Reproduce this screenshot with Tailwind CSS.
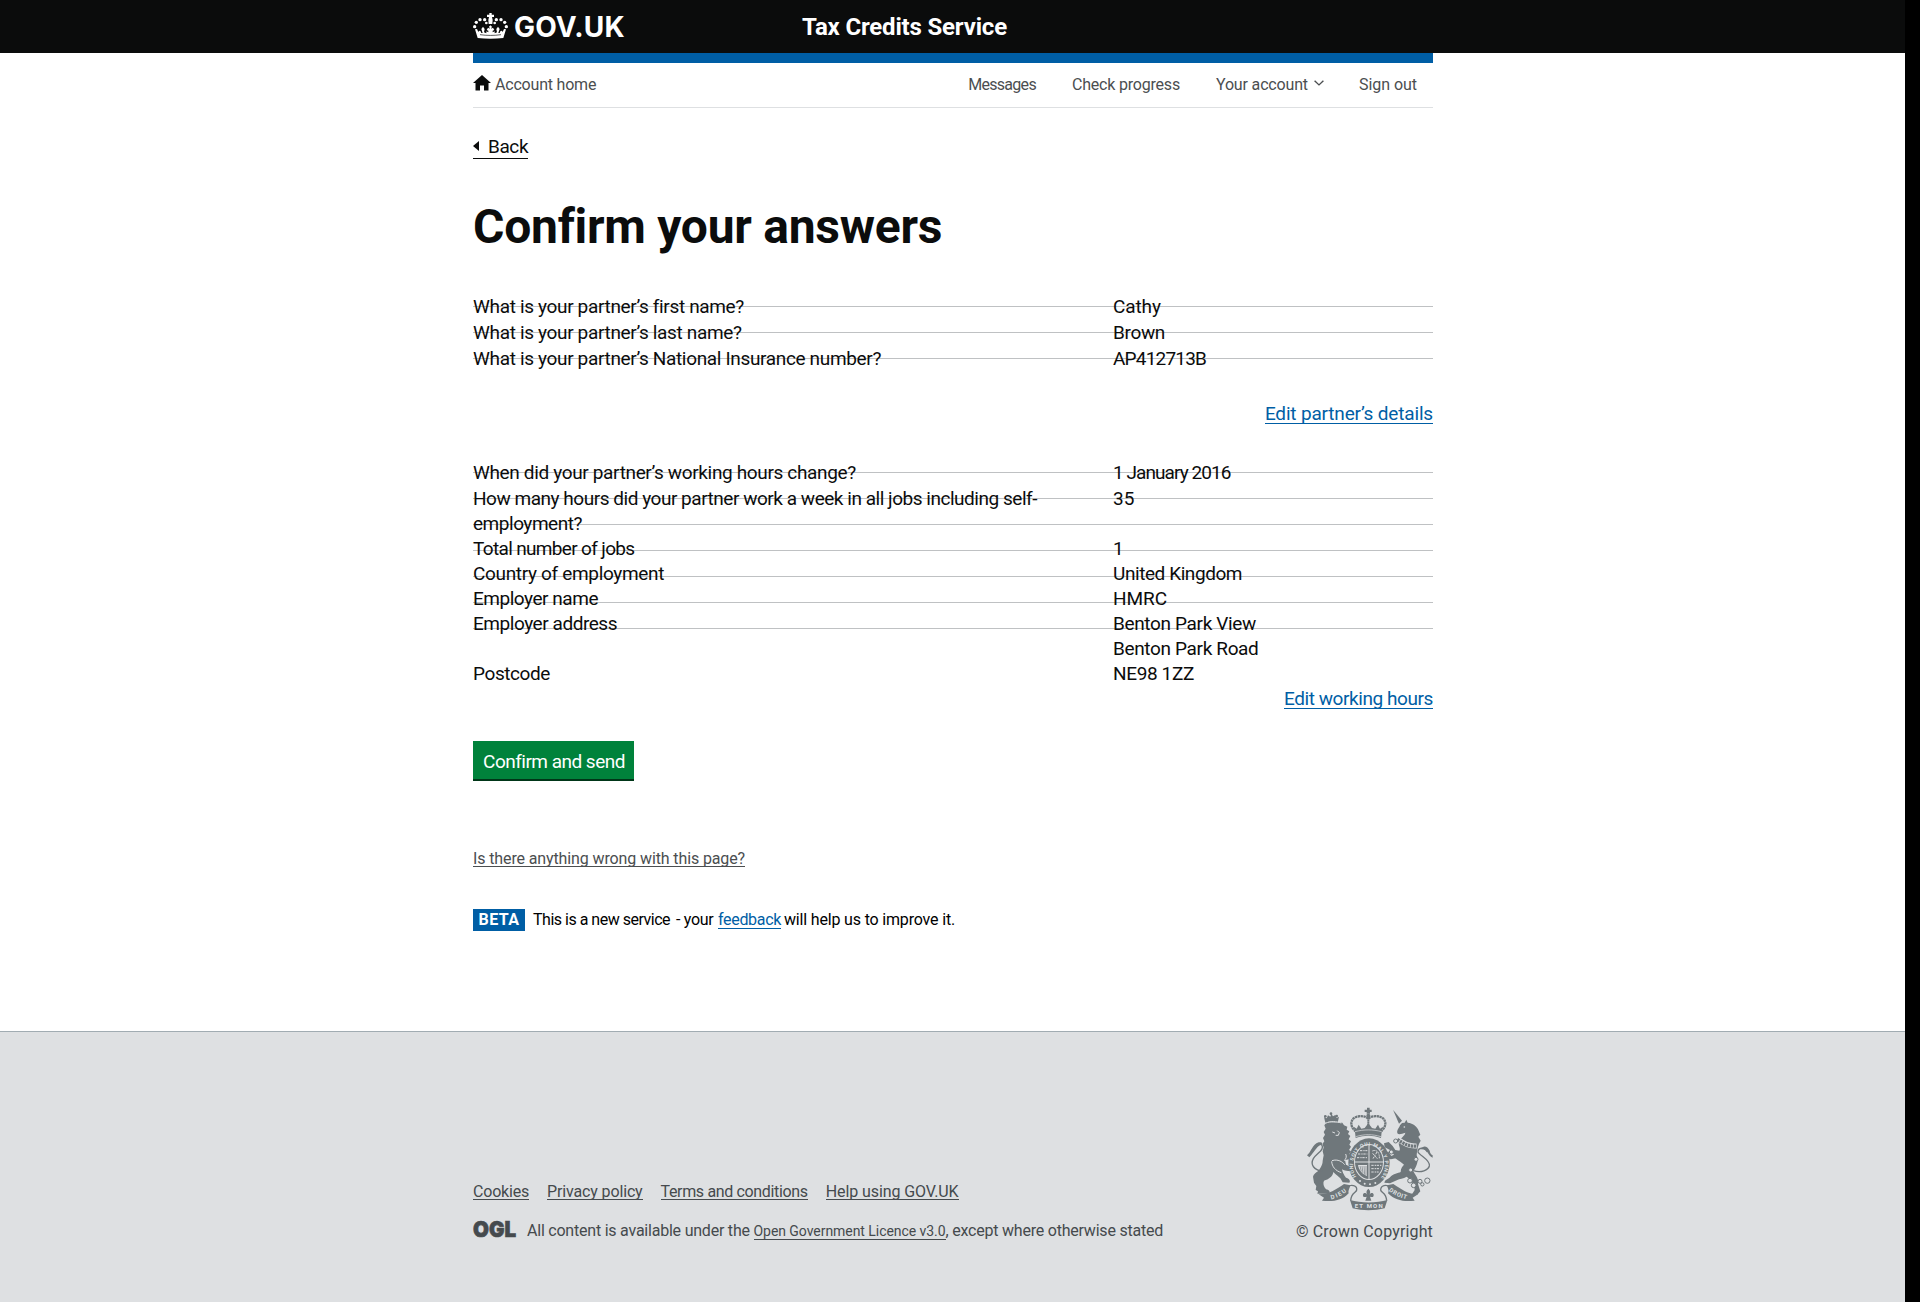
<!DOCTYPE html>
<html lang="en">
<head>
<meta charset="utf-8">
<title>Confirm your answers</title>
<script src="https://cdn.jsdelivr.net/npm/@tailwindcss/browser@4"></script>
</head>
<body class="bg-black font-['Roboto','Liberation_Sans',sans-serif] text-[#0b0c0c]">
<div class="flex min-h-[1302px] w-[1905px] flex-col bg-white">

  <header class="h-[53px] bg-[#0b0c0c] text-white">
    <div class="ml-[473px] flex h-full w-[960px] items-center">
      <a class="flex w-[329px] items-center gap-[6px]">
        <svg class="-mt-[2px] h-[26px] w-[35px]" viewBox="39 38 105 78" fill="#fff">
          <path d="M53 113 L45 87 L51 86 L55 95 C57 91 59 90 62 93 L64 98 L68 98 L64 86 L69 79 L74 86 L72 96 L79 99 L79 93 L85 96 L85 91 L80 89 L84 82 L90 85 L87 79 L91 75 L96 79 L93 85 L99 82 L103 89 L98 91 L98 96 L104 93 L104 99 L111 96 L109 86 L114 79 L119 86 L115 98 L119 98 L121 93 C124 90 126 91 128 95 L132 86 L138 87 L130 113 C105 116 78 116 53 113Z"/>
          <path d="M60 103 C80 106 103 106 123 103" fill="none" stroke="#0b0c0c" stroke-width="2"/>
          <circle cx="44" cy="79" r="5"/><circle cx="49" cy="66" r="5"/><circle cx="60" cy="58" r="5"/><circle cx="74" cy="58" r="5"/><circle cx="79" cy="68" r="4"/>
          <circle cx="139" cy="79" r="5"/><circle cx="134" cy="66" r="5"/><circle cx="123" cy="58" r="5"/><circle cx="109" cy="58" r="5"/><circle cx="104" cy="68" r="4"/>
          <path d="M88 38h7v5h7v7h-6l2 9-1 12h-11l-1-12 2-9h-6v-7h7z"/>
        </svg>
        <span class="font-['Inter',sans-serif] text-[28px] font-bold leading-8 tracking-[0.2px]">GOV.UK</span>
      </a>
      <span class="text-2xl font-bold tracking-[-0.18px]">Tax Credits Service</span>
    </div>
  </header>

  <div class="ml-[473px] w-[960px]">
    <div class="h-[10px] bg-[#005ea5]"></div>
    <nav class="flex h-[45px] items-center justify-between border-b border-[#dee0e2] pr-4 text-base leading-5 text-[#4b4e50]">
      <a class="flex items-center gap-1">
        <svg class="-mt-[5px] h-4 w-[18px]" viewBox="0 0 18 16" fill="#0b0c0c"><path d="M9 0l9 8h-2.500v7.500h-4.500v-5h-4v5h-4.500v-7.500h-2.500z"/></svg>
        <span class="tracking-[-0.2px]">Account home</span>
      </a>
      <div class="flex items-center gap-9">
        <a class="tracking-[-0.7px]">Messages</a>
        <a class="tracking-[-0.2px]">Check progress</a>
        <a class="flex items-center gap-[6px]"><span class="tracking-[-0.16px]">Your account</span>
          <svg class="-mt-[4px] h-[6px] w-[10px]" viewBox="0 0 10 6" fill="none" stroke="#4b4e50" stroke-width="1.400"><path d="M0.600 0.700 5 4.900 9.400 0.700"/></svg></a>
        <a class="-ml-px tracking-[-0.04px]">Sign out</a>
      </div>
    </nav>

    <main class="flex flex-col items-start text-[19px] leading-[25px]">
      <a class="mt-[26px] flex h-[25px] items-start gap-[9px] border-b border-[#0b0c0c] leading-[25px]">
        <svg class="mt-[7px] h-[10px] w-[6px]" viewBox="0 0 6 10" fill="#0b0c0c"><path d="M0 5 6 0V10z"/></svg>
        <span class="tracking-[-0.4px]">Back</span>
      </a>
      <h1 class="mt-[43px] text-5xl font-bold leading-[50px] tracking-[-0.26px]">Confirm your answers</h1>

      <!-- Partner details: ruled rows sit behind the question list -->
      <section class="mt-[29px] grid w-full">
        <ul class="col-start-1 row-start-1">
          <li class="h-[26px] border-b border-[#bfc1c3]"></li>
          <li class="h-[26px] border-b border-[#bfc1c3]"></li>
          <li class="h-[26px] border-b border-[#bfc1c3]"></li>
        </ul>
        <dl class="col-start-1 row-start-1 -mb-[13px] grid auto-rows-[26px] grid-cols-[640px_1fr] pt-[13px] tracking-[-0.34px]">
          <dt>What is your partner’s first name?</dt><dd class="tracking-[-0.1px]">Cathy</dd>
          <dt>What is your partner’s last name?</dt><dd>Brown</dd>
          <dt>What is your partner’s National Insurance number?</dt><dd class="tracking-[-0.8px]">AP412713B</dd>
        </dl>
      </section>
      <a class="mt-[44px] h-[21px] self-end border-b border-[#005ea5] leading-[22px] tracking-[-0.17px] text-[#005ea5]">Edit partner’s details</a>

      <!-- Working hours -->
      <section class="mt-[23px] grid w-full">
        <ul class="col-start-1 row-start-1">
          <li class="h-[26px] border-b border-[#bfc1c3]"></li>
          <li class="h-[26px] border-b border-[#bfc1c3]"></li>
          <li class="h-[26px] border-b border-[#bfc1c3]"></li>
          <li class="h-[26px] border-b border-[#bfc1c3]"></li>
          <li class="h-[26px] border-b border-[#bfc1c3]"></li>
          <li class="h-[26px] border-b border-[#bfc1c3]"></li>
          <li class="h-[26px] border-b border-[#bfc1c3]"></li>
        </ul>
        <dl class="col-start-1 row-start-1 grid grid-cols-[640px_1fr] pt-[13px]">
          <dt class="h-[26px] tracking-[-0.35px]">When did your partner’s working hours change?</dt><dd class="tracking-[-0.93px]">1 January 2016</dd>
          <dt class="tracking-[-0.47px]">How many hours did your partner work a week in all jobs including self-<br>employment?</dt><dd>35</dd>
          <dt class="tracking-[-0.66px]">Total number of jobs</dt><dd>1</dd>
          <dt class="tracking-[-0.33px]">Country of employment</dt><dd class="tracking-[-0.43px]">United Kingdom</dd>
          <dt class="tracking-[-0.47px]">Employer name</dt><dd class="tracking-[-0.05px]">HMRC</dd>
          <dt class="tracking-[-0.45px]">Employer address</dt><dd class="tracking-[-0.35px]">Benton Park View<br>Benton Park Road</dd>
          <dt class="tracking-[-0.41px]">Postcode</dt><dd class="tracking-[-0.36px]">NE98 1ZZ</dd>
        </dl>
      </section>
      <a class="mt-[2px] h-[21px] self-end border-b border-[#005ea5] leading-[22px] tracking-[-0.42px] text-[#005ea5]">Edit working hours</a>

      <button class="mt-8 flex h-10 w-[161px] justify-center border-b-2 border-[#003618] bg-[#00823b] pt-2 pl-px tracking-[-0.52px] text-white">Confirm and send</button>

      <a class="mt-[69px] h-[17px] border-b border-[#4b4e50] text-base leading-[18px] tracking-[-0.12px] text-[#4b4e50]">Is there anything wrong with this page?</a>

      <div class="mt-[42px] flex h-[22px] items-start text-base leading-[22px] text-black">
        <strong class="mr-2 h-[22px] w-[52px] bg-[#005ea5] text-center font-bold tracking-[0.45px] text-white">BETA</strong>
        <span class="flex items-center">
          <span class="w-[143px] tracking-[-0.49px]">This is a new service</span>
          <span class="w-[42px] tracking-[-0.3px]">- your</span>
          <a class="mt-px mr-[3px] h-[17px] border-b border-[#005ea5] leading-4 tracking-[-0.32px] text-[#005ea5]">feedback</a>
          <span class="tracking-[-0.17px]">will help us to improve it.</span>
        </span>
      </div>
    </main>
  </div>

  <footer class="mt-[100px] flex-1 border-t border-[#a1acb2] bg-[#dee0e2] text-base text-[#454a4d]">
    <div class="ml-[473px] flex w-[960px] justify-between">
      <div class="pt-[151px]">
        <ul class="flex gap-[18px] leading-[18px]">
          <li class="h-[17px] border-b border-[#454a4d] tracking-[-0.2px]">Cookies</li>
          <li class="h-[17px] border-b border-[#454a4d] tracking-[-0.14px]">Privacy policy</li>
          <li class="h-[17px] border-b border-[#454a4d] tracking-[-0.35px]">Terms and conditions</li>
          <li class="h-[17px] border-b border-[#454a4d] tracking-[-0.08px]">Help using GOV.UK</li>
        </ul>
        <div class="mt-5 flex items-start">
          <svg class="mr-[10px] h-[20px] w-[44px] overflow-visible" viewBox="0 0 44 20"><text x="0" y="16.500" textLength="43" lengthAdjust="spacingAndGlyphs" font-family="Inter" font-weight="900" font-size="22" fill="#454a4d" stroke="#454a4d" stroke-width="0.700">OGL</text></svg>
          <p class="mt-px whitespace-pre leading-5 tracking-[-0.22px]">All content is available under the <a class="inline-block h-[17px] border-b border-[#454a4d] text-sm leading-4 tracking-[-0.05px]">Open Government Licence v3.0</a>, except where otherwise stated</p>
        </div>
      </div>
      <div class="flex flex-col items-end pt-[75px]">
        <svg class="h-[104px] w-[126px]" viewBox="113 49 378 312" fill="#6f777b">
          <!-- lion -->
          <path d="M172 94 L165 104 169 114 163 124 167 132 161 142 165 152 159 160 163 170 160 182 163 194 160 210 C160 224 152 232 148 240 C140 245 132 250 131 258 L134 276 L141 286 L139 298 L146 302 L144 309 L180 309 C184 303 178 297 170 296 C163 288 160 278 164 270 C178 266 190 258 192 244 C200 252 208 258 213 263 L220 275 L240 276 C245 270 238 263 230 261 C224 254 219 244 218 236 C226 240 236 243 242 240 C247 232 240 226 230 222 L227 208 C240 208 246 202 247 194 L240 190 L245 182 L239 178 L245 168 L240 162 L245 152 L238 146 L243 136 L236 130 L240 122 L232 117 L234 108 L224 104 L219 96 Z"/>
          <path d="M168 96 l-4 -17 8 4 4-9 7 4 3-9 5 8 7-4 4 9 7-4 -4 18 c-12-5-24-5-37 0z"/>
          <circle cx="185" cy="69" r="4"/><circle cx="168" cy="77" r="4"/><circle cx="202" cy="76" r="4"/>
          <path d="M159 242 C134 238 122 222 132 204 C141 188 167 178 158 164 C152 156 138 162 124 187" fill="none" stroke="#6f777b" stroke-width="4"/>
          <path d="M113 194 C126 184 128 162 148 155 C160 153 162 160 152 164 C142 168 134 186 120 200Z"/>
          <g fill="none" stroke="#dee0e2" stroke-width="3"><path d="M168 98 C184 91 200 92 216 97"/><path d="M189 124 l8 3 M204 120 l6 6 -3 8 -8 0"/><path d="M188 210 C206 204 220 214 226 222 M187 212 C188 228 198 240 216 246"/><path d="M229 190 C233 198 230 206 224 210"/></g>
          <!-- unicorn -->
          <path d="M371 57 L398 90 L389 99Z"/>
          <path d="M398 97 L406 96 L411 87 L415 96 C432 98 444 108 448 120 L453 132 447 138 454 150 C446 162 443 178 442 194 C450 212 440 230 432 242 C438 254 450 266 446 280 L453 302 L444 312 L428 311 L436 298 C436 280 424 268 412 258 C402 264 390 264 384 268 L362 278 L345 276 C348 266 356 266 362 260 C372 248 386 248 394 244 C394 232 400 226 404 222 C396 214 388 210 380 204 C376 202 366 208 358 204 L351 188 L356 182 L366 196 L374 192 L362 178 L346 170 L344 158 L358 154 L370 166 L378 178 L390 180 C396 172 384 162 390 150 C396 140 406 136 408 126 C398 128 390 134 384 128 C382 116 390 112 392 104Z"/>
          <path d="M386 146 C404 160 420 168 442 166" fill="none" stroke="#dee0e2" stroke-width="15"/>
          <path d="M384 146 C404 160 420 168 442 166" fill="none" stroke="#6f777b" stroke-width="10" stroke-dasharray="7 2"/>
          <path d="M432 240 C456 248 477 238 480 226 C484 208 452 196 446 184 C446 172 464 166 474 184" fill="none" stroke="#6f777b" stroke-width="4"/>
          <path d="M490 201 C474 194 476 174 454 176 C462 162 474 166 481 180 C482 188 486 192 490 194Z"/>
          <g fill="#dee0e2" stroke="#6f777b" stroke-width="3"><circle cx="379" cy="151" r="6"/><circle cx="366" cy="184" r="6"/><circle cx="440" cy="206" r="6"/><circle cx="424" cy="238" r="6"/><circle cx="422" cy="270" r="7"/><circle cx="433" cy="284" r="7"/><circle cx="452" cy="272" r="6"/><circle cx="474" cy="270" r="8"/><circle cx="459" cy="281" r="5"/></g>
          <circle cx="405" cy="109" r="2.500" fill="#dee0e2"/>
          <!-- crown -->
          <path d="M293 51h8v6h6v7h-5v5h-10v-5h-6v-7h7z"/><circle cx="297" cy="75" r="6"/>
          <path d="M296 84 C288 74 262 74 252 84 C242 94 244 112 262 124 M298 84 C306 74 332 74 342 84 C352 94 350 112 332 124" fill="none" stroke="#6f777b" stroke-width="7" stroke-dasharray="7 1.500"/>
          <path d="M297 80V118" stroke="#6f777b" stroke-width="6" stroke-dasharray="5 1"/>
          <path d="M257 124 L253 108 L262 114 L268 102 L276 114 L286 112 L297 98 L308 112 L318 114 L326 102 L332 114 L341 108 L337 124 L335 142 C308 133 286 133 259 142Z"/>
          <path d="M257 123 C284 116 310 116 337 123 M259 138 C286 130 308 130 335 138" fill="none" stroke="#dee0e2" stroke-width="2"/>
          <!-- garter and shield -->
          <ellipse cx="299" cy="216" rx="62" ry="73"/>
          <ellipse cx="299" cy="214" rx="45" ry="54" fill="#dee0e2"/>
          <ellipse cx="299" cy="214" rx="42" ry="51"/>
          <path d="M299 162V266 M257 214H341" stroke="#dee0e2" stroke-width="3"/>
          <g fill="none" stroke="#dee0e2" stroke-width="3" stroke-dasharray="7 3 4 2"><path d="M272 180h22 M266 190h28 M263 201h30 M306 224h30 M306 234h27 M306 244h22"/><path d="M309 181c14-6 22 6 21 22 M310 188l14 16 M323 184l-12 20"/></g>
          <path d="M266 223 C269 239 279 251 293 256 V223Z" fill="#dee0e2"/>
          <g stroke="#6f777b" stroke-width="2"><path d="M272 226l4 16 M278 226l3 22 M284 226l2 26 M290 226v28"/></g>
          <path id="garter" d="M262 260 A48 58 0 1 1 336 260" fill="none"/>
          <text font-family="Roboto" font-weight="700" font-size="15" fill="#dee0e2"><textPath href="#garter" textLength="245" startOffset="2">HONI SOIT QUI MAL Y PENSE</textPath></text>
          <g fill="#dee0e2"><circle cx="272" cy="271" r="3"/><circle cx="286" cy="279" r="3"/><circle cx="302" cy="281" r="3"/><circle cx="318" cy="277" r="3"/></g>
          <!-- motto ribbon -->
          <path d="M148 311 C178 311 202 296 224 280 L243 284 C240 296 236 300 238 308 C218 330 190 334 158 330 L164 321Z"/>
          <path d="M446 311 C416 311 396 296 372 280 L353 284 C356 296 360 300 356 308 C378 330 406 334 436 330 L430 321Z"/>
          <path d="M236 289 C244 280 264 284 262 298 C260 308 246 304 244 330 M360 289 C352 280 334 284 334 298 C336 308 350 304 352 330" fill="none" stroke="#6f777b" stroke-width="4"/>
          <path d="M242 328 C274 338 322 338 354 328 L346 353 C316 361 278 361 250 353Z"/>
          <path d="M297 294 C304 300 304 306 300 312 C306 302 318 308 311 319 C307 320 305 318 302 318 L306 330 H288 L292 318 C289 318 287 320 283 319 C276 308 288 302 294 312 C290 306 290 300 297 294Z"/>
          <g font-family="Roboto" font-weight="700" font-size="18" fill="#dee0e2">
            <text x="256" y="353" textLength="84">ET MON</text>
            <path id="dieu" d="M186 326 Q214 320 238 298" fill="none"/><text><textPath href="#dieu" textLength="52">DIEU</textPath></text>
            <path id="droit" d="M358 300 Q380 320 418 327" fill="none"/><text><textPath href="#droit" textLength="60">DROIT</textPath></text>
          </g>
        </svg>
        <p class="mt-[11px] leading-5 tracking-[0.15px]">© Crown Copyright</p>
      </div>
    </div>
  </footer>
</div>
</body>
</html>
